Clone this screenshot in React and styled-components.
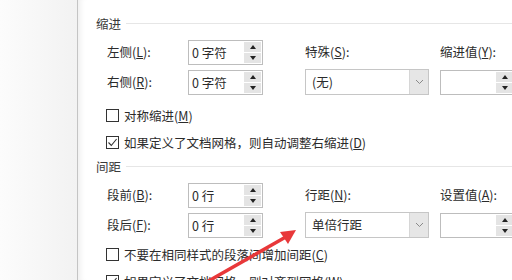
import React from 'react';
import styled, { createGlobalStyle } from 'styled-components';

const Global = createGlobalStyle`
  html, body {
    margin: 0;
    padding: 0;
    background: #fff;
    overflow: hidden;
  }
  body {
    font-family: "Noto Sans CJK SC", "Microsoft YaHei", "Liberation Sans", sans-serif;
    font-size: 12.5px;
    color: #2b2b2b;
  }
`;

function Spinner({ value }) {
  return (
    <SpinBox>
      <SpinText>{value}</SpinText>
      <SpinButtons>
        <SpinBtn><Tri $up /></SpinBtn>
        <SpinBtn><Tri /></SpinBtn>
      </SpinButtons>
    </SpinBox>
  );
}

function Select({ value }) {
  return (
    <SelectBox>
      <SelectText>{value}</SelectText>
      <DropBtn>
        <svg width="9" height="6" viewBox="0 0 9 6">
          <path d="M1 1 L4.5 4.5 L8 1" fill="none" stroke="#8a8a8a" strokeWidth="1" />
        </svg>
      </DropBtn>
    </SelectBox>
  );
}

function Check({ checked, children }) {
  return (
    <CheckRow>
      <Box>
        {checked && (
          <svg width="11" height="11" viewBox="0 0 11 11">
            <path d="M1.5 5.5 L4.3 8.5 L9.6 2" fill="none" stroke="#333" strokeWidth="1.1" />
          </svg>
        )}
      </Box>
      <span>{children}</span>
    </CheckRow>
  );
}

function App() {
  return (
    <Window>
      <Global />
      <SidePane />
      <Dialog>
        <SectionTitle>缩进</SectionTitle>
        <FieldGrid>
          <Label>左侧(<u>L</u>):</Label>
          <Spinner value="0 字符" />
          <Label>特殊(<u>S</u>):</Label>
          <Label>缩进值(<u>Y</u>):</Label>

          <Label>右侧(<u>R</u>):</Label>
          <Spinner value="0 字符" />
          <Select value="(无)" />
          <Spinner value="" />
        </FieldGrid>
        <Checks $top={10}>
          <Check>对称缩进(<u>M</u>)</Check>
          <Check checked>如果定义了文档网格，则自动调整右缩进(<u>D</u>)</Check>
        </Checks>

        <SectionTitle $top={6}>间距</SectionTitle>
        <FieldGrid>
          <Label>段前(<u>B</u>):</Label>
          <Spinner value="0 行" />
          <Label>行距(<u>N</u>):</Label>
          <Label>设置值(<u>A</u>):</Label>

          <Label>段后(<u>F</u>):</Label>
          <Spinner value="0 行" />
          <Select value="单倍行距" />
          <Spinner value="" />
        </FieldGrid>
        <Checks $top={6}>
          <Check>不要在相同样式的段落间增加间距(<u>C</u>)</Check>
          <Check checked>如果定义了文档网格，则对齐到网格(<u>W</u>)</Check>
        </Checks>
      </Dialog>
      <Arrow width="512" height="280" viewBox="0 0 512 280">
        <line x1="198" y1="287" x2="284" y2="238" stroke="#e8383a" strokeWidth="3.5" strokeLinecap="round" />
        <polygon points="296,230 280,232 288,244" fill="#e8383a" />
      </Arrow>
    </Window>
  );
}

export default App;


const Window = styled.div`
  position: relative;
  display: flex;
  width: 512px;
  height: 280px;
  overflow: hidden;
`;

const SidePane = styled.div`
  width: 77px;
  flex-shrink: 0;
  background: linear-gradient(to right, #fcfcfc, #f2f2f2);
  border-right: 1px solid #c4c4c4;
`;

const Dialog = styled.div`
  flex: 1;
  padding: 15px 0 0 18px;
  background: #fff;
  box-shadow: inset 7px 0 6px -5px rgba(0, 0, 0, 0.08);
`;

const SectionTitle = styled.div`
  display: flex;
  align-items: center;
  gap: 5px;
  height: 16px;
  margin-top: ${p => p.$top || 0}px;
  color: #3a3a3a;

  &::after {
    content: '';
    flex: 1;
    height: 1px;
    background: #e6e6e6;
  }
`;

const FieldGrid = styled.div`
  display: grid;
  grid-template-columns: 81px 117px 135px 1fr;
  grid-template-rows: 26px 26px;
  row-gap: 4px;
  margin: 8px 0 0 11px;
  align-items: center;
`;

const Label = styled.div`
  white-space: nowrap;
  line-height: 16px;
`;

const SpinBox = styled.div`
  display: flex;
  width: 75px;
  height: 25px;
  box-sizing: border-box;
  border: 1px solid #bdbdbd;
  background: #fff;
`;

const SpinText = styled.div`
  flex: 1;
  padding-left: 3px;
  line-height: 23px;
  white-space: nowrap;
`;

const SpinButtons = styled.div`
  display: flex;
  flex-direction: column;
  gap: 1px;
  width: 17px;
  padding: 1px;
`;

const SpinBtn = styled.div`
  flex: 1;
  display: flex;
  align-items: center;
  justify-content: center;
  background: #e4e4e4;
`;

const Tri = styled.div`
  width: 0;
  height: 0;
  border-left: 3px solid transparent;
  border-right: 3px solid transparent;
  ${p => (p.$up ? 'border-bottom: 4px solid #222;' : 'border-top: 4px solid #222;')}
`;

const SelectBox = styled.div`
  display: flex;
  width: 124px;
  height: 26px;
  box-sizing: border-box;
  border: 1px solid #c6c6c6;
  background: #fff;
`;

const SelectText = styled.div`
  flex: 1;
  padding-left: 6px;
  line-height: 24px;
  white-space: nowrap;
`;

const DropBtn = styled.div`
  width: 18px;
  display: flex;
  align-items: center;
  justify-content: center;
  background: #e6e6e6;
  border-left: 1px solid #d6d6d6;
`;

const Checks = styled.div`
  display: flex;
  flex-direction: column;
  gap: 7px;
  margin: ${p => p.$top}px 0 0 10px;
`;

const CheckRow = styled.div`
  display: flex;
  align-items: center;
  gap: 5px;
  height: 20px;
  white-space: nowrap;
`;

const Box = styled.div`
  width: 13px;
  height: 13px;
  box-sizing: border-box;
  border: 1px solid #333;
  display: flex;
  align-items: center;
  justify-content: center;
  background: #fff;
`;

const Arrow = styled.svg`
  position: absolute;
  left: 0;
  top: 0;
  pointer-events: none;
`;
